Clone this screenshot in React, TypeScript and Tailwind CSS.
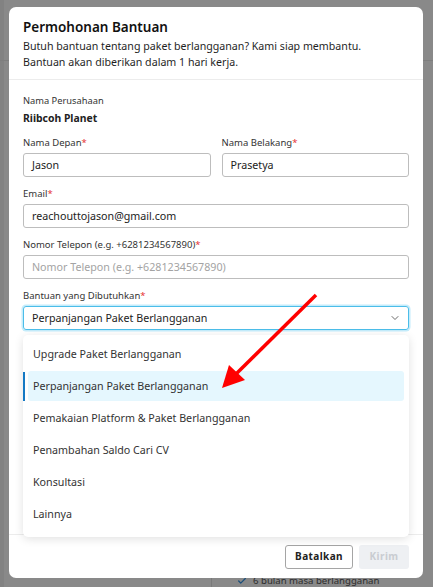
import { ChevronDown, Check } from 'lucide-react';

const options = [
  'Upgrade Paket Berlangganan',
  'Perpanjangan Paket Berlangganan',
  'Pemakaian Platform & Paket Berlangganan',
  'Penambahan Saldo Cari CV',
  'Konsultasi',
  'Lainnya',
];

function Label({ text, required }: { text: string; required?: boolean }) {
  return (
    <div className="h-[14px] mb-[3px] text-[9.5px] leading-[14px] text-[#333]">
      {text}
      {required && <span className="text-[#e5312f]">*</span>}
    </div>
  );
}

function Field({ value, placeholder }: { value?: string; placeholder?: string }) {
  return (
    <div className="h-[24px] rounded-[3px] border border-[#bdbdbd] pl-[8px] flex items-center text-[10.7px]">
      {value ? (
        <span className="text-[#222]">{value}</span>
      ) : (
        <span className="text-[#a3a3a3]">{placeholder}</span>
      )}
    </div>
  );
}

export default function App() {
  return (
    <div
      className="relative w-[433px] h-[587px] overflow-hidden bg-[#898989]"
      style={{ fontFamily: '"Noto Sans", "Open Sans", sans-serif' }}
    >
      {/* page behind the overlay */}
      <div className="absolute inset-0 pointer-events-none">
        <div className="absolute left-0 top-0 bottom-0 w-[4px] bg-[#828282]" />
        <div className="absolute left-0 right-0 top-[60px] h-px bg-[#7e7e7e]" />
        <div className="absolute left-[211px] top-[560px] bottom-0 w-px bg-[#7a7a7a]" />
        <div className="absolute left-[237px] top-[574px] flex items-center gap-[6px] text-[9.6px] leading-[14px] text-[#2c2c2c]">
          <Check size={10} strokeWidth={3} className="text-[#1b4f7a]" />
          <span>6 bulan masa berlangganan</span>
        </div>
      </div>

      {/* modal */}
      <div className="relative ml-[9px] mt-[7px] w-[414px] h-[571px] bg-white rounded-[7px] flex flex-col">
        <div className="px-[14px] pt-[10px] pb-[9px] border-b border-[#ececec]">
          <h1 className="text-[13.5px] leading-[21px] font-semibold text-[#111]">Permohonan Bantuan</h1>
          <p className="text-[10.65px] leading-[16px] text-[#1f1f1f]">
            Butuh bantuan tentang paket berlangganan? Kami siap membantu.
            <br />
            Bantuan akan diberikan dalam 1 hari kerja.
          </p>
        </div>

        <div className="flex-1 px-[14px] pt-[14px]">
          <div className="text-[9.3px] leading-[14px] text-[#333]">Nama Perusahaan</div>
          <div className="mt-[2px] text-[10.4px] leading-[16px] font-bold text-[#222]">Riibcoh Planet</div>

          <div className="mt-[10px] grid grid-cols-2 gap-x-[11px]">
            <div>
              <Label text="Nama Depan" required />
              <Field value="Jason" />
            </div>
            <div>
              <Label text="Nama Belakang" required />
              <Field value="Prasetya" />
            </div>
          </div>

          <div className="mt-[10px]">
            <Label text="Email" required />
            <Field value="reachouttojason@gmail.com" />
          </div>

          <div className="mt-[10px]">
            <Label text="Nomor Telepon (e.g. +6281234567890)" required />
            <Field placeholder="Nomor Telepon (e.g. +6281234567890)" />
          </div>

          <div className="mt-[10px]">
            <Label text="Bantuan yang Dibutuhkan" required />
            <div className="h-[24px] rounded-[3px] border border-[#4cbde9] shadow-[0_0_0_1.5px_#c4ecfb] pl-[8px] pr-[7px] flex items-center justify-between text-[10.7px] text-[#222]">
              <span>Perpanjangan Paket Berlangganan</span>
              <ChevronDown size={12} strokeWidth={1.75} className="text-[#555]" />
            </div>
          </div>
        </div>

        <div className="h-[44px] border-t border-[#ececec] px-[14px] flex items-center justify-end gap-[6px]">
          <button className="h-[24px] w-[68px] rounded-[3px] border border-[#a5a5a5] text-[10px] font-bold tracking-[0.04em] text-[#222]">
            Batalkan
          </button>
          <button className="h-[24px] w-[50px] rounded-[3px] bg-[#eef0f3] text-[10px] font-bold tracking-[0.04em] text-[#c9ccd1]">
            Kirim
          </button>
        </div>
      </div>

      {/* dropdown menu */}
      <div className="absolute left-[23px] top-[335px] w-[386px] h-[202px] bg-white rounded-[5px] shadow-[0_2px_10px_rgba(0,0,0,0.12)] pt-[4px] pb-[8px] flex flex-col gap-[2px]">
        <div className="absolute left-0 top-[37px] h-[29px] w-[2px] bg-[#1479c4]" />
        {options.map((o, i) => (
          <div
            key={o}
            className={`mx-[5px] h-[30px] rounded-[3px] px-[5px] flex items-center text-[10.7px] text-[#333] ${
              i === 1 ? 'bg-[#e5f7fe]' : ''
            }`}
          >
            {o}
          </div>
        ))}
      </div>

      {/* annotation arrow */}
      <svg className="absolute left-0 top-0 pointer-events-none" width="433" height="587">
        <line x1="316" y1="295" x2="236" y2="374" stroke="#ff0000" strokeWidth="3.5" />
        <polygon points="222,388 229,365 245,380" fill="#ff0000" />
      </svg>
    </div>
  );
}
